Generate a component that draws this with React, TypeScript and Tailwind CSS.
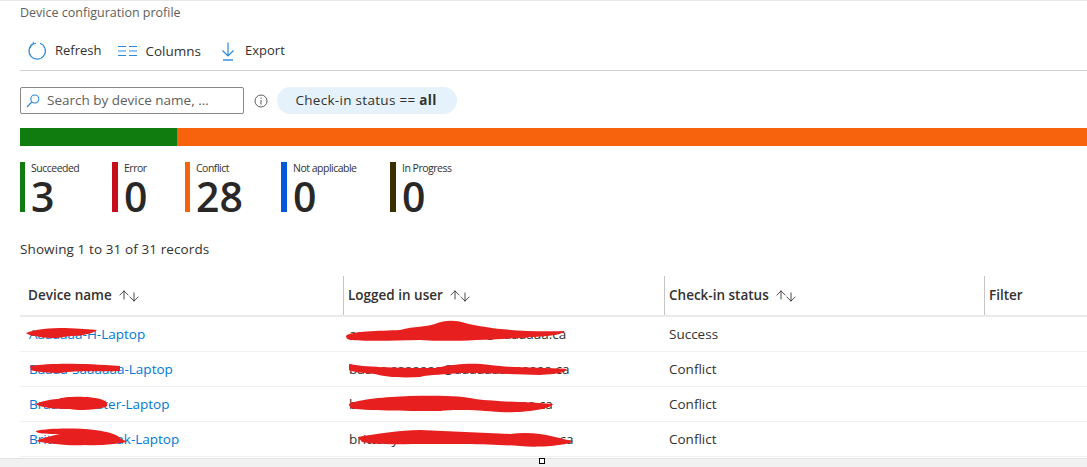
import { ArrowDown, ArrowUp } from 'lucide-react';

const font = "font-['Open_Sans',sans-serif]";

const stats = [
  { label: 'Succeeded', value: '3', bar: 'bg-[#107c10] w-[5px]', width: 'w-[92px]' },
  { label: 'Error', value: '0', bar: 'bg-[#c50f1f] w-[6px]', width: 'w-[73px]' },
  { label: 'Conflict', value: '28', bar: 'bg-[#f7630c] w-[5px]', width: 'w-[96px]' },
  { label: 'Not applicable', value: '0', bar: 'bg-[#0258d6] w-[6px]', width: 'w-[109px]' },
  { label: 'In Progress', value: '0', bar: 'bg-[#3b2e00] w-[6px]', width: 'w-[90px]' },
];

const rows = [
  { device: 'Aaaaaaa-H-Laptop', user: 'aaaaaaaaaaaaaaaaaa@aaaaaaa.ca', status: 'Success' },
  { device: 'Baaaa-Saaaaaa-Laptop', user: 'baaaa.saaaaaa@aaaaaaaaaaaaa.ca', status: 'Conflict' },
  { device: 'Braaaaaaaater-Laptop', user: 'braaaaaaaaaaaaaaaaaaaaaaa.ca', status: 'Conflict' },
  { device: 'Brittaaaaaaaaak-Laptop', user: 'brittanyaaaaaaaaaaaaaaaaaaaaa.ca', status: 'Conflict' },
];

// redaction scribbles, x is page x, y is relative to the svg
const scribbles = [
  {
    device: 'M26 7 C35 3 50 2 65 2 C80 3 90 3 97 4 C92 8 80 10 70 10 C60 12 50 13 40 11 C34 10 28 9 26 7 Z',
    user: 'M346 10 C350 5 380 5 400 4 C415 0 425 1 435 -2 C445 -6 455 -6 465 -3 C490 3 520 6 565 5 C560 10 545 10 520 12 C480 14 450 16 420 14 C390 15 360 15 350 14 C347 13 346 12 346 10 Z',
  },
  {
    device: 'M30 5 C50 2 80 2 120 5 L120 10 C100 11 80 9 60 12 C50 12 35 11 31 9 Z',
    user: 'M349 3 C365 6 390 7 435 7 C460 2 475 2 490 4 C510 7 540 6 567 8 C565 12 555 13 540 14 C510 13 480 12 460 12 C445 14 430 13 420 16 C400 17 385 16 375 13 C365 12 352 11 349 9 Z',
  },
  {
    device: 'M35 8 C45 4 55 3 58 3 C65 0 90 0 100 3 C107 5 109 8 106 11 C95 14 80 15 70 13 C55 13 42 12 35 8 Z',
    user: 'M349 8 C360 3 385 1 410 0 C440 -1 465 0 475 3 C500 6 530 6 553 8 C550 14 520 17 500 16 C480 14 450 13 441 15 C420 15 380 15 355 13 C350 12 349 10 349 8 Z',
  },
  {
    device: 'M36 0 C50 -3 75 -3 95 -1 C110 1 118 4 120 7 L127 11 C115 13 100 15 85 14 C70 15 50 13 36 10 C45 6 60 3 60 3 C50 3 36 3 36 0 Z',
    user: 'M358 6 C375 3 400 -1 420 -1 C450 0 480 2 510 3 C525 1 540 2 555 6 C565 8 570 10 573 10 C570 14 540 17 520 15 C490 13 450 13 430 13 C400 13 375 14 362 11 Z',
  },
];

function SortIcon() {
  return (
    <span className="ml-[5px] flex items-center text-[#323130]">
      <ArrowUp size={14} strokeWidth={1.5} className="-mr-[4px] -mt-[2px]" />
      <ArrowDown size={14} strokeWidth={1.5} className="mt-[2px]" />
    </span>
  );
}

function HeaderCell({ label, width, pad, sort }: { label: string; width: string; pad: string; sort?: boolean }) {
  return (
    <div className={`flex h-[39px] items-center border-r border-[#c8c6c4] ${width} ${pad} last:border-r-0`}>
      <span className="text-[13.5px] font-semibold text-[#323130]">{label}</span>
      {sort && <SortIcon />}
    </div>
  );
}

function RefreshIcon() {
  return (
    <svg width="20" height="20" viewBox="0 0 20 20" fill="none" stroke="#2b88d8" strokeWidth="1.2">
      <path d="M13 2.2 A8.2 8.2 0 1 1 6.5 2.6" />
      <path d="M6 .8 L7 3 L9.2 2" strokeWidth="1" />
    </svg>
  );
}

function ColumnsIcon() {
  return (
    <svg width="19" height="12" viewBox="0 0 19 12" fill="none" stroke="#2b88d8" strokeWidth="1">
      <path d="M0 1.5 H8 M0 6 H8 M0 10.5 H8 M11 1.5 H19 M11 6 H19 M11 10.5 H19" />
    </svg>
  );
}

function ExportIcon() {
  return (
    <svg width="14" height="19" viewBox="0 0 14 19" fill="none" stroke="#2b88d8" strokeWidth="1.2">
      <path d="M7 .5 V14 M1.5 8.5 L7 14 L12.5 8.5" />
      <path d="M2 18 H12" strokeWidth="1.4" />
    </svg>
  );
}

function SearchIcon() {
  return (
    <svg width="14" height="14" viewBox="0 0 14 14" fill="none" stroke="#2b88d8" strokeWidth="1.1">
      <circle cx="8.8" cy="5" r="4" />
      <path d="M5.8 8 L1 13" />
    </svg>
  );
}

function InfoIcon() {
  return (
    <svg width="14" height="14" viewBox="0 0 14 14" fill="none" stroke="#605e5c" strokeWidth="1">
      <circle cx="7" cy="7" r="6" />
      <path d="M7 6 V10.5 M7 3.5 V4.8" />
    </svg>
  );
}

export default function App() {
  return (
    <div className={`flex h-[467px] w-[1087px] flex-col overflow-hidden bg-white text-[#323130] ${font}`}>
      <div className="h-[1px] shrink-0 bg-[#e8e8e8]" />

      <main className="flex-1 pl-[20px]">
        <div className="h-[24px] pt-[3px] text-[12.5px] leading-[18px] text-[#605e5c]">Device configuration profile</div>

        <div className="flex h-[46px] items-center border-b border-[#d2d0ce] pt-[7px] text-[13px]">
          <div className="ml-[7px] flex items-center gap-[8px]">
            <RefreshIcon />
            <span>Refresh</span>
          </div>
          <div className="ml-[17px] flex items-center gap-[8px]">
            <ColumnsIcon />
            <span className="text-[13.5px]">Columns</span>
          </div>
          <div className="ml-[20px] flex items-center gap-[10px]">
            <ExportIcon />
            <span>Export</span>
          </div>
        </div>

        <div className="mt-[16px] flex h-[27px] items-center">
          <div className="flex h-[27px] w-[224px] items-center gap-[7px] rounded-[2px] border border-[#8a8886] pl-[5px] text-[13.5px] text-[#605e5c]">
            <SearchIcon />
            <span>Search by device name, ...</span>
          </div>
          <span className="ml-[10px] flex">
            <InfoIcon />
          </span>
          <div className="ml-[9px] flex h-[27px] w-[180px] items-center justify-center rounded-full bg-[#e5f1fb] pr-[2px] text-[13.5px] tracking-[0.3px]">
            Check-in status ==&nbsp;<b className="font-bold">all</b>
          </div>
        </div>

        <div className="mt-[14px] flex h-[18px]">
          <div className="w-[157px] bg-[#107c10]" />
          <div className="flex-1 bg-[#f7630c]" />
        </div>

        <div className="mt-[16px] flex h-[50px]">
          {stats.map((s) => (
            <div key={s.label} className={`flex ${s.width}`}>
              <div className={`h-[50px] shrink-0 ${s.bar}`} />
              <div className="pl-[6px]">
                <div className="text-[10.5px] leading-[12px] tracking-[-0.5px] text-[#323130]">{s.label}</div>
                <div className="mt-[3px] text-[41px] font-semibold leading-[38px] text-[#292827]">{s.value}</div>
              </div>
            </div>
          ))}
        </div>

        <div className="mt-[28px] h-[18px] text-[13.5px] leading-[18px] tracking-[0.1px]">Showing 1 to 31 of 31 records</div>

        <div className="mt-[18px]">
          <div className="flex border-b-2 border-[#edebe9]">
            <HeaderCell label="Device name" width="w-[324px]" pad="pl-[8px]" sort />
            <HeaderCell label="Logged in user" width="w-[321px]" pad="pl-[4px]" sort />
            <HeaderCell label="Check-in status" width="w-[320px]" pad="pl-[4px]" sort />
            <HeaderCell label="Filter" width="flex-1" pad="pl-[4px]" />
          </div>

          {rows.map((r, i) => (
            <div key={r.user} className="relative flex h-[35px] items-center border-b border-[#f0f0f0] text-[13.5px]">
              <div className="w-[324px] pl-[9px] text-[#0078d4]">{r.device}</div>
              <div className="w-[321px] pl-[5px] text-[#323130]">{r.user}</div>
              <div className="pl-[4px]">{r.status}</div>
              {/* red marker over names, part of the screenshot */}
              <svg className="absolute left-[-20px] top-[9px] overflow-visible" width="600" height="20" fill="#e81f1f">
                <path d={scribbles[i].device} />
                <path d={scribbles[i].user} />
              </svg>
            </div>
          ))}
        </div>
      </main>

      <div className="relative h-[9px] shrink-0 border-t border-[#e1e1e1] bg-[#f1f1f1]">
        <div className="absolute left-[539px] top-[-1px] h-[6px] w-[6px] border border-black bg-white" />
      </div>
    </div>
  );
}
